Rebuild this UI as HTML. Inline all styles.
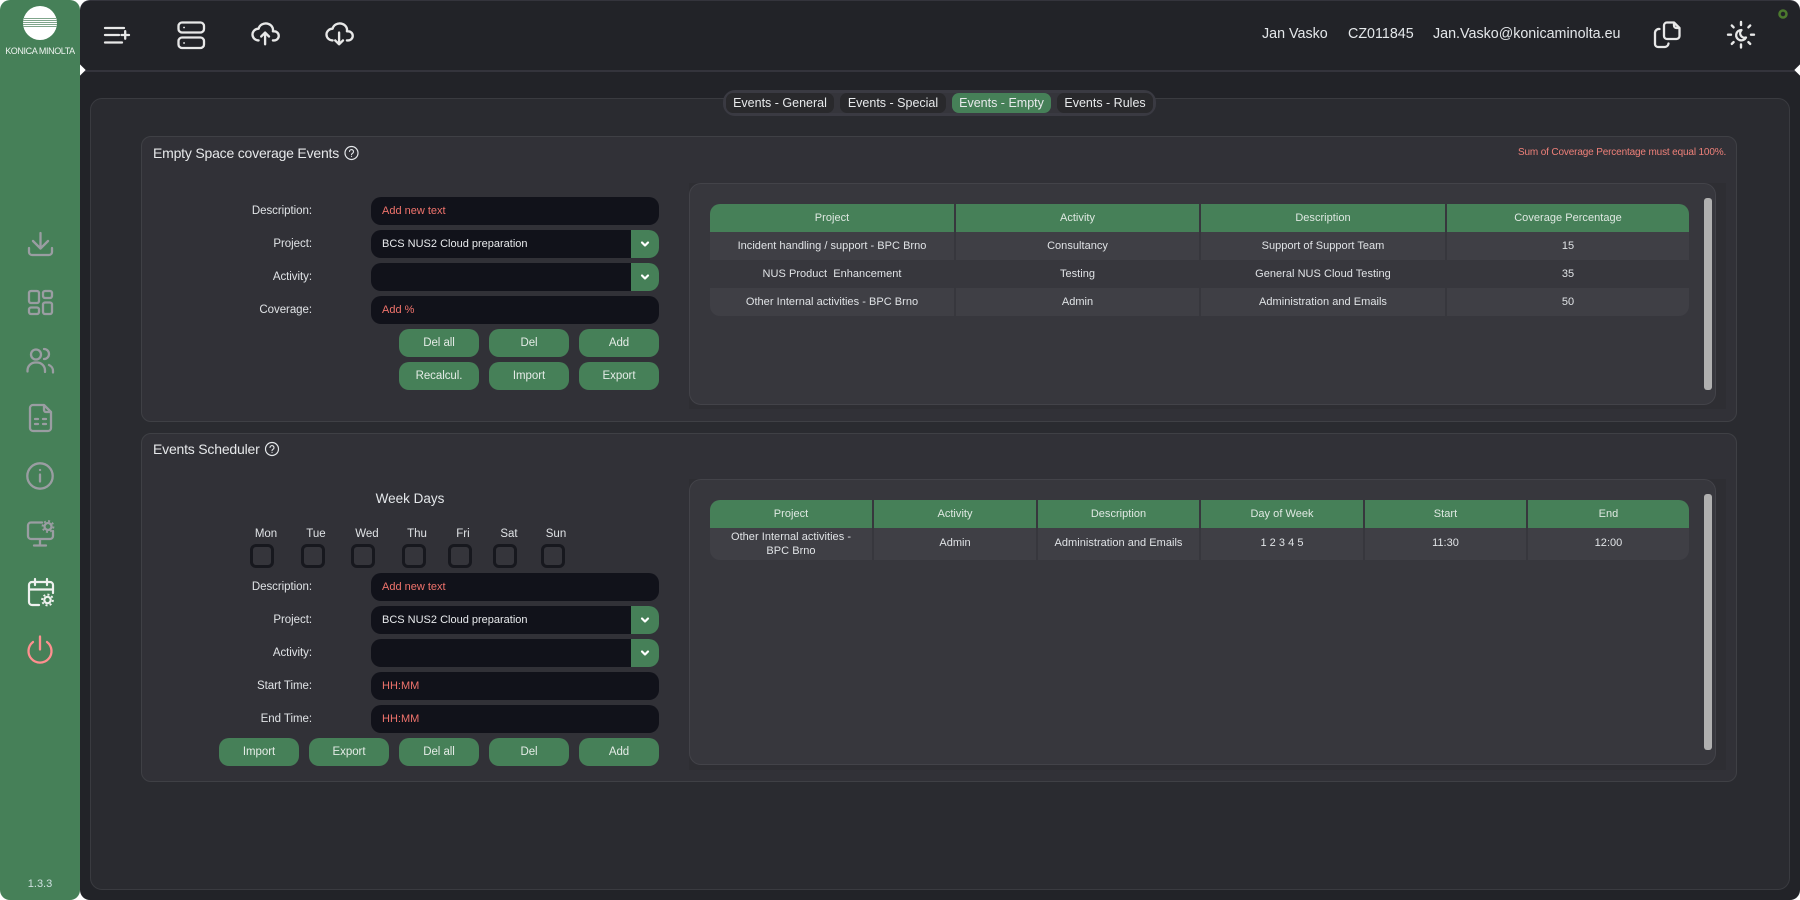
<!DOCTYPE html>
<html><head><meta charset="utf-8"><title>Events</title>
<style>
*{box-sizing:border-box;margin:0;padding:0}
html,body{width:1800px;height:900px;overflow:hidden;background:#fff}
body{font-family:"Liberation Sans",sans-serif;color:#e4e7ea;position:relative}
.a{position:absolute;white-space:nowrap}
.t{position:absolute;white-space:nowrap;font-size:12px;line-height:30px;height:30px}
.side{left:0;top:0;width:80px;height:900px;background:#468058;border-radius:10px}
.top{left:80px;top:0;width:1720px;height:72px;background:#222328;border-radius:10px 10px 0 0;border-top:1px solid #34343c}
.main{left:80px;top:70px;width:1720px;height:830px;background:#222328;border-radius:0 0 10px 10px}
.line{left:80px;top:69.500px;width:1720px;height:2px;background:#34343c}
.panel{left:90px;top:98px;width:1700px;height:792px;background:#2a2b30;border:1px solid #3a3b40;border-radius:12px}
.sec{left:141px;width:1596px;background:#313137;border:1px solid #3f4045;border-radius:10px}
.title{font-size:14px;line-height:20px;letter-spacing:-.2px;color:#e6e8ea}
.lbl{right:1488px;font-size:11.5px;letter-spacing:-.05px;text-align:right;color:#e0e3e6}
.inp{left:371px;width:288px;height:28px;background:#11121a;border-radius:10px;font-size:11px;line-height:29px;padding-left:11px;color:#f0736c}
.sel{color:#e8eaec}
.arr{left:631px;width:28px;height:28px;background:#468058;border-radius:0 10px 10px 0}
.arr svg{display:block}
.btn{width:80px;height:28px;background:#468058;border-radius:10px;text-align:center;font-size:11.5px;letter-spacing:-.05px;line-height:29px;color:#e4ebe6}
.back{left:689px;width:1037px;background:#2e2e33}
.card{left:689px;width:1027px;background:#37373d;border:1px solid #434349;border-radius:12px}
.sb{left:1704px;width:8px;background:#b0b0b0;border-radius:3px}
.h{height:28px;background:#468058;text-align:center;font-size:11px;letter-spacing:.03px;line-height:29px;color:#dfe8e2}
.c{height:28px;text-align:center;font-size:11px;letter-spacing:.03px;line-height:29px;color:#e0e3e6}
.o{background:#3f3f45}
.tabs{left:723px;top:90px;width:433px;height:26px;background:#35353b;border:3px solid #3a3a42;border-radius:12px}
.tab{top:93px;height:20px;border-radius:7px;background:#29292c;text-align:center;font-size:12.5px;line-height:21px;color:#e8eaec}
.cb{top:544px;width:24px;height:24px;border:3px solid #17181e;border-radius:6px;background:#35353b}
.d{top:527px;width:40px;text-align:center;font-size:11.5px;line-height:14px;color:#e0e3e6}
svg.ic{position:absolute;left:0;top:0;width:1800px;height:900px;fill:none;stroke-linecap:round;stroke-linejoin:round}
.w{position:absolute;width:8px;height:8px;background:#fff;transform:rotate(45deg)}
</style></head><body>

<div class="a main"></div>
<div class="a top"></div>
<div class="a line"></div>
<div class="w" style="left:76px;top:66px"></div>
<div class="w" style="left:1796px;top:66px"></div>
<div class="a side"></div>
<div class="a panel"></div>

<!-- tabs -->
<div class="a tabs"></div>
<div class="a tab" style="left:726px;width:108px">Events - General</div>
<div class="a tab" style="left:840px;width:106px">Events - Special</div>
<div class="a tab" style="left:952px;width:99px;background:#468058">Events - Empty</div>
<div class="a tab" style="left:1057px;width:96px">Events - Rules</div>

<!-- logo -->
<svg class="ic" style="z-index:2">
<circle cx="40" cy="23" r="17" fill="#fff"/>
<g stroke="#7fa58b" stroke-width=".9" stroke-linecap="butt">
<path d="M23 18.500h34M23 20.500h34M23 22.500h34M23 24.500h34M23 26.500h34"/>
</g>
</svg>
<div class="a" style="left:0;top:45px;width:80px;text-align:center;font-size:9px;line-height:12px;color:#eef3ef;letter-spacing:-.4px;z-index:3">KONICA MINOLTA</div>

<!-- top bar icons -->
<svg class="ic" style="z-index:2" stroke="#e8e8e8" stroke-width="2.300">
<path d="M105 28h19M105 35h14M105 42.500h17M121.500 35h7.500M125.200 31.200v7.500"/>
<rect x="178.500" y="22.500" width="25.500" height="10" rx="3.500"/>
<rect x="178.500" y="37.500" width="25.500" height="10.500" rx="3.500"/>
<path d="M184 27.500h.1M184 43h.1" stroke-width="1.800"/>
<g transform="translate(249.500,17) scale(1.3)">
<path d="M7 18a4.600 4.400 0 0 1 0 -9a5 4.500 0 0 1 11 2h1a3.500 3.500 0 0 1 0 7h-1" stroke-width="1.800"/>
<path d="M9 15l3 -3l3 3M12 12v9" stroke-width="1.800"/>
</g>
<g transform="translate(323.500,17) scale(1.3)">
<path d="M7 18a4.600 4.400 0 0 1 0 -9a5 4.500 0 0 1 11 2h1a3.500 3.500 0 0 1 0 7h-1" stroke-width="1.800"/>
<path d="M9 18l3 3l3 -3M12 12v9" stroke-width="1.800"/>
</g>
<path d="M1667 22.500h7l5.500 5.500v8a3 3 0 0 1 -3 3h-9.500a3 3 0 0 1 -3 -3v-10.500a3 3 0 0 1 3 -3zM1674 22.500v3a2.500 2.500 0 0 0 2.500 2.500h3" stroke-width="2.300"/>
<path d="M1659.500 29a4 4 0 0 0 -4.500 3.500v11.500a3 3 0 0 0 3 3h7a4 4 0 0 0 3.500 -3.500" stroke-width="2.300"/>
<path d="M1741 22v3M1741 44.500v3M1728 34.700h3M1751 34.700h3M1731.800 25.500l1.800 1.800M1748.400 42.100l1.800 1.800M1731.800 43.900l1.800 -1.800M1748.400 27.300l1.800 -1.800" stroke-width="2.400"/>
<path d="M1741.500 30a5.200 5.200 0 1 0 4.500 7.500a4.500 4.500 0 0 1 -4.500 -7.500z" stroke-width="2.300"/>
<circle cx="1783" cy="14" r="3.500" stroke="#4c7a2e" stroke-width="2.500"/>
</svg>
<div class="t" style="left:1262px;top:19px;font-size:14.300px">Jan Vasko</div>
<div class="t" style="left:1348px;top:19px;font-size:14.300px">CZ011845</div>
<div class="t" style="left:1433px;top:19px;font-size:14.300px">Jan.Vasko@konicaminolta.eu</div>

<!-- sidebar icons -->
<svg class="ic" style="z-index:2" stroke="#9a9da2" stroke-width="2.300">
<path d="M29 248v4a3 3 0 0 0 3 3h17a3 3 0 0 0 3 -3v-4M40.500 233v15M33 241l7.500 7.500l7.500 -7.500"/>
<rect x="29" y="291" width="10" height="12" rx="2"/>
<rect x="43" y="291" width="9" height="7" rx="2"/>
<rect x="29" y="307.500" width="10" height="6.500" rx="2"/>
<rect x="43" y="302.500" width="9" height="11.500" rx="2"/>
<circle cx="36" cy="354.500" r="5"/>
<path d="M27.500 371.500v-1a8 8 0 0 1 8 -8h1.500a8 8 0 0 1 8 8v1.500M44 349a5 5 0 0 1 0 10M49 365a6.500 6.500 0 0 1 4 6v1.500"/>
<path d="M33 405h11l7 7v16a3 3 0 0 1 -3 3h-15a3 3 0 0 1 -3 -3v-20a3 3 0 0 1 3 -3zM44 405v5a2 2 0 0 0 2 2h5M35 419h3M43 419h3M35 424h3M43 424h3"/>
<circle cx="40" cy="476" r="12.700"/>
<path d="M40 470h.1M40 474.500v7"/>
<path d="M42 522.500h-11a3 3 0 0 0 -3 3v10.500a3 3 0 0 0 3 3h19a3 3 0 0 0 3 -3v-5M40 539v6M34 545.500h12"/>
<circle cx="48" cy="526.500" r="3.500"/>
<circle cx="48" cy="526.500" r="5.500" stroke-width="1.800" stroke-dasharray="2 2.300" stroke-linecap="butt"/>
<g stroke="#eff1ef">
<path d="M39 605h-7a3 3 0 0 1 -3 -3v-17a3 3 0 0 1 3 -3h18a3 3 0 0 1 3 3v8M29 589.500h24M35 579v6M47 579v6" stroke-width="2.200"/>
<circle cx="47.500" cy="600" r="3.200" stroke-width="2.200"/>
<circle cx="47.500" cy="600" r="5.400" stroke-width="1.900" stroke-dasharray="2 2.200" stroke-linecap="butt"/>
</g>
<path d="M40 636.500v13M33 642a11.500 11.500 0 1 0 14 0" stroke="#ff8f8f" stroke-width="2.300"/>
</svg>
<div class="a" style="left:0;top:877px;width:80px;text-align:center;font-size:11px;line-height:14px;color:#cfe0e0;z-index:3">1.3.3</div>

<!-- SECTION 1 -->
<div class="a sec" style="top:136px;height:286px"></div>
<div class="a title" style="left:153px;top:143px">Empty Space coverage Events</div>
<div class="a" style="left:1518px;top:147px;font-size:10px;line-height:12px;color:#ee8079;letter-spacing:-.15px">Sum of Coverage Percentage must equal 100%.</div>

<div class="t lbl" style="top:196px">Description:</div>
<div class="t lbl" style="top:229px">Project:</div>
<div class="t lbl" style="top:262px">Activity:</div>
<div class="t lbl" style="top:295px">Coverage:</div>
<div class="a inp" style="top:197px">Add new text</div>
<div class="a inp sel" style="top:230px">BCS NUS2 Cloud preparation</div>
<div class="a arr" style="top:230px"><svg width="28" height="28" fill="none"><path d="M11 12.500l3 3l3 -3" stroke="#fff" stroke-width="2.200" stroke-linecap="round" stroke-linejoin="round"/></svg></div>
<div class="a inp" style="top:263px"></div>
<div class="a arr" style="top:263px"><svg width="28" height="28" fill="none"><path d="M11 12.500l3 3l3 -3" stroke="#fff" stroke-width="2.200" stroke-linecap="round" stroke-linejoin="round"/></svg></div>
<div class="a inp" style="top:296px">Add %</div>
<div class="a btn" style="left:399px;top:329px">Del all</div>
<div class="a btn" style="left:489px;top:329px">Del</div>
<div class="a btn" style="left:579px;top:329px">Add</div>
<div class="a btn" style="left:399px;top:362px">Recalcul.</div>
<div class="a btn" style="left:489px;top:362px">Import</div>
<div class="a btn" style="left:579px;top:362px">Export</div>

<div class="a back" style="top:183px;height:226px"></div>
<div class="a card" style="top:183px;height:222px"></div>
<div class="a sb" style="top:198px;height:192px"></div>

<div class="a h" style="left:710px;top:204px;width:244px;border-radius:10px 0 0 0">Project</div>
<div class="a h" style="left:956px;top:204px;width:243px">Activity</div>
<div class="a h" style="left:1201px;top:204px;width:244px">Description</div>
<div class="a h" style="left:1447px;top:204px;width:242px;border-radius:0 10px 0 0">Coverage Percentage</div>

<div class="a c o" style="left:710px;top:232px;width:244px">Incident handling / support - BPC Brno</div>
<div class="a c o" style="left:956px;top:232px;width:243px">Consultancy</div>
<div class="a c o" style="left:1201px;top:232px;width:244px">Support of Support Team</div>
<div class="a c o" style="left:1447px;top:232px;width:242px">15</div>

<div class="a c" style="left:710px;top:260px;width:244px;white-space:pre">NUS Product  Enhancement</div>
<div class="a c" style="left:956px;top:260px;width:243px">Testing</div>
<div class="a c" style="left:1201px;top:260px;width:244px">General NUS Cloud Testing</div>
<div class="a c" style="left:1447px;top:260px;width:242px">35</div>

<div class="a c o" style="left:710px;top:288px;width:244px;border-radius:0 0 0 10px">Other Internal activities - BPC Brno</div>
<div class="a c o" style="left:956px;top:288px;width:243px">Admin</div>
<div class="a c o" style="left:1201px;top:288px;width:244px">Administration and Emails</div>
<div class="a c o" style="left:1447px;top:288px;width:242px;border-radius:0 0 10px 0">50</div>

<!-- SECTION 2 -->
<div class="a sec" style="top:433px;height:349px"></div>
<div class="a title" style="left:153px;top:439px">Events Scheduler</div>
<div class="a" style="left:310px;top:491px;width:200px;text-align:center;font-size:13.500px;line-height:16px;color:#e4e7ea">Week Days</div>

<div class="a d" style="left:246px">Mon</div>
<div class="a d" style="left:296px">Tue</div>
<div class="a d" style="left:347px">Wed</div>
<div class="a d" style="left:397px">Thu</div>
<div class="a d" style="left:443px">Fri</div>
<div class="a d" style="left:489px">Sat</div>
<div class="a d" style="left:536px">Sun</div>
<div class="a cb" style="left:250px"></div>
<div class="a cb" style="left:301px"></div>
<div class="a cb" style="left:351px"></div>
<div class="a cb" style="left:402px"></div>
<div class="a cb" style="left:448px"></div>
<div class="a cb" style="left:493px"></div>
<div class="a cb" style="left:541px"></div>

<div class="t lbl" style="top:572px">Description:</div>
<div class="t lbl" style="top:605px">Project:</div>
<div class="t lbl" style="top:638px">Activity:</div>
<div class="t lbl" style="top:671px">Start Time:</div>
<div class="t lbl" style="top:704px">End Time:</div>
<div class="a inp" style="top:573px">Add new text</div>
<div class="a inp sel" style="top:606px">BCS NUS2 Cloud preparation</div>
<div class="a arr" style="top:606px"><svg width="28" height="28" fill="none"><path d="M11 12.500l3 3l3 -3" stroke="#fff" stroke-width="2.200" stroke-linecap="round" stroke-linejoin="round"/></svg></div>
<div class="a inp" style="top:639px"></div>
<div class="a arr" style="top:639px"><svg width="28" height="28" fill="none"><path d="M11 12.500l3 3l3 -3" stroke="#fff" stroke-width="2.200" stroke-linecap="round" stroke-linejoin="round"/></svg></div>
<div class="a inp" style="top:672px">HH:MM</div>
<div class="a inp" style="top:705px">HH:MM</div>
<div class="a btn" style="left:219px;top:738px">Import</div>
<div class="a btn" style="left:309px;top:738px">Export</div>
<div class="a btn" style="left:399px;top:738px">Del all</div>
<div class="a btn" style="left:489px;top:738px">Del</div>
<div class="a btn" style="left:579px;top:738px">Add</div>

<div class="a back" style="top:479px;height:291px"></div>
<div class="a card" style="top:479px;height:286px"></div>
<div class="a sb" style="top:494px;height:256px"></div>

<div class="a h" style="left:710px;top:500px;width:162px;border-radius:10px 0 0 0">Project</div>
<div class="a h" style="left:874px;top:500px;width:162px">Activity</div>
<div class="a h" style="left:1038px;top:500px;width:161px">Description</div>
<div class="a h" style="left:1201px;top:500px;width:162px">Day of Week</div>
<div class="a h" style="left:1365px;top:500px;width:161px">Start</div>
<div class="a h" style="left:1528px;top:500px;width:161px;border-radius:0 10px 0 0">End</div>

<div class="a c o" style="left:710px;top:528px;width:162px;height:32px;border-radius:0 0 0 10px;line-height:14px;padding-top:2px">Other Internal activities -<br>BPC Brno</div>
<div class="a c o" style="left:874px;top:528px;width:162px;height:32px;line-height:31px">Admin</div>
<div class="a c o" style="left:1038px;top:528px;width:161px;height:32px;line-height:31px">Administration and Emails</div>
<div class="a c o" style="left:1201px;top:528px;width:162px;height:32px;line-height:31px">1 2 3 4 5</div>
<div class="a c o" style="left:1365px;top:528px;width:161px;height:32px;line-height:31px">11:30</div>
<div class="a c o" style="left:1528px;top:528px;width:161px;height:32px;line-height:31px;border-radius:0 0 10px 0">12:00</div>

<svg class="ic"><circle cx="351.500" cy="153" r="6.500" stroke="#e4e7ea" stroke-width="1.200"/><path d="M349.500 151.500a2 2 0 1 1 3 1.800c-.6.400-1 .7-1 1.500M351.500 156.500h.1" stroke="#e4e7ea" stroke-width="1.100"/>
<circle cx="272" cy="449" r="6.500" stroke="#e4e7ea" stroke-width="1.200"/><path d="M270 447.500a2 2 0 1 1 3 1.800c-.6.400-1 .7-1 1.500M272 452.500h.1" stroke="#e4e7ea" stroke-width="1.100"/></svg>

</body></html>
